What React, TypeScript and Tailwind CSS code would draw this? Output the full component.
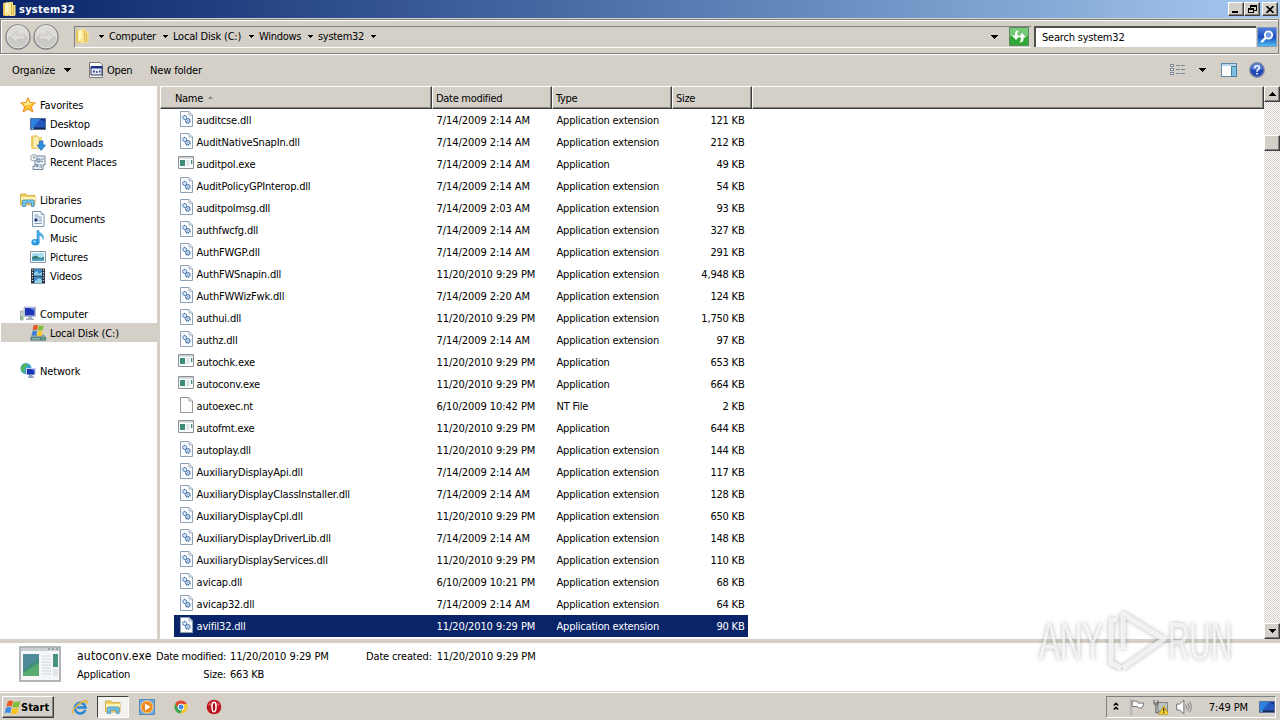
import React from 'react';
import clsx from 'clsx';

type IconProps = { className?: string };

interface FileRow {
  name: string;
  date: string;
  kind: 'dll' | 'exe' | 'nt';
  size: string;
}

const files: FileRow[] = [
  { name: 'auditcse.dll', date: '7/14/2009 2:14 AM', kind: 'dll', size: '121 KB' },
  { name: 'AuditNativeSnapIn.dll', date: '7/14/2009 2:14 AM', kind: 'dll', size: '212 KB' },
  { name: 'auditpol.exe', date: '7/14/2009 2:14 AM', kind: 'exe', size: '49 KB' },
  { name: 'AuditPolicyGPInterop.dll', date: '7/14/2009 2:14 AM', kind: 'dll', size: '54 KB' },
  { name: 'auditpolmsg.dll', date: '7/14/2009 2:03 AM', kind: 'dll', size: '93 KB' },
  { name: 'authfwcfg.dll', date: '7/14/2009 2:14 AM', kind: 'dll', size: '327 KB' },
  { name: 'AuthFWGP.dll', date: '7/14/2009 2:14 AM', kind: 'dll', size: '291 KB' },
  { name: 'AuthFWSnapin.dll', date: '11/20/2010 9:29 PM', kind: 'dll', size: '4,948 KB' },
  { name: 'AuthFWWizFwk.dll', date: '7/14/2009 2:20 AM', kind: 'dll', size: '124 KB' },
  { name: 'authui.dll', date: '11/20/2010 9:29 PM', kind: 'dll', size: '1,750 KB' },
  { name: 'authz.dll', date: '7/14/2009 2:14 AM', kind: 'dll', size: '97 KB' },
  { name: 'autochk.exe', date: '11/20/2010 9:29 PM', kind: 'exe', size: '653 KB' },
  { name: 'autoconv.exe', date: '11/20/2010 9:29 PM', kind: 'exe', size: '664 KB' },
  { name: 'autoexec.nt', date: '6/10/2009 10:42 PM', kind: 'nt', size: '2 KB' },
  { name: 'autofmt.exe', date: '11/20/2010 9:29 PM', kind: 'exe', size: '644 KB' },
  { name: 'autoplay.dll', date: '11/20/2010 9:29 PM', kind: 'dll', size: '144 KB' },
  { name: 'AuxiliaryDisplayApi.dll', date: '7/14/2009 2:14 AM', kind: 'dll', size: '117 KB' },
  { name: 'AuxiliaryDisplayClassInstaller.dll', date: '7/14/2009 2:14 AM', kind: 'dll', size: '128 KB' },
  { name: 'AuxiliaryDisplayCpl.dll', date: '11/20/2010 9:29 PM', kind: 'dll', size: '650 KB' },
  { name: 'AuxiliaryDisplayDriverLib.dll', date: '7/14/2009 2:14 AM', kind: 'dll', size: '148 KB' },
  { name: 'AuxiliaryDisplayServices.dll', date: '11/20/2010 9:29 PM', kind: 'dll', size: '110 KB' },
  { name: 'avicap.dll', date: '6/10/2009 10:21 PM', kind: 'dll', size: '68 KB' },
  { name: 'avicap32.dll', date: '7/14/2009 2:14 AM', kind: 'dll', size: '64 KB' },
  { name: 'avifil32.dll', date: '11/20/2010 9:29 PM', kind: 'dll', size: '90 KB' },
];

const typeNames = { dll: 'Application extension', exe: 'Application', nt: 'NT File' };

const Svg: React.FC<{ className?: string; children: React.ReactNode }> = ({ className, children }) => (
  <svg viewBox="0 0 16 16" className={clsx('h-4 w-4 shrink-0', className)}>
    {children}
  </svg>
);

const FolderIcon = ({ className }: IconProps) => (
  <Svg className={className}>
    <path d="M1 2l5-1v14H2l-1-1z" fill="#e8c557" />
    <path d="M7 1h4v3h2.500v10l-1 1H7z" fill="#f5dd84" />
    <path d="M3 2l6-1v14l-6-1z" fill="#f8e694" />
    <path d="M3.500 3l3-1v8l-3 3z" fill="#fdf6c8" />
    <path d="M9.500 2v12M11.500 5v9" stroke="#d5ac45" strokeWidth=".8" />
  </Svg>
);

const StarIcon = () => (
  <Svg>
    <path d="M8 .7l2.100 4.800 5.300.5-4 3.600 1.500 5.400L8 12.100 3.100 15l1.500-5.400-4-3.600 5.300-.5z" fill="#ffc42e" stroke="#e8892b" strokeWidth="1" />
    <path d="M8 2.800l1.400 3.500 3.600.3-4 .9-5 1.100 1-.9-2-1.300 3.700-.3z" fill="#fff0a0" />
  </Svg>
);

const DesktopIcon = ({ className }: IconProps) => (
  <Svg className={className}>
    <path d="M.5 2.500h15v11H.5z" fill="#2457bd" stroke="#5b6e96" />
    <path d="M1 3h9L3 12H1z" fill="#2c83df" />
    <path d="M10 3h5v3z" fill="#12368f" />
    <path d="M1 11.500h14V13H1z" fill="#16264c" />
    <path d="M1.500 11.500h2V13h-2z" fill="#5fd0ee" />
  </Svg>
);

const DownloadsIcon = () => (
  <Svg>
    <path d="M1 1l6-1v14H2l-1-1z" fill="#efcf66" />
    <path d="M3 1l6 1v12l-6-1z" fill="#fcf0ae" stroke="#d9b04a" strokeWidth=".5" />
    <path d="M9 2h3v5H9z" fill="#f2d470" />
    <path d="M9.500 6h3.500v4h2.500L11.200 15.500 7 10h2.500z" fill="#2f8fe0" stroke="#1c63b5" strokeWidth=".7" />
  </Svg>
);

const RecentIcon = () => (
  <Svg>
    <path d="M5 2h10v9h-2v4.500H3V12h2z" fill="#e9eff4" stroke="#71889c" />
    <path d="M7 5h3v3H7zM11 5h3M11 7.500h2M6 10.500h2v2H6zM9.500 11H12M9.500 13H12" fill="#bdd0de" stroke="#64809a" strokeWidth=".9" />
    <circle cx="3.800" cy="3.800" r="3.200" fill="#f5f8fa" stroke="#8fa0ae" />
    <path d="M3.800 2v2h1.500" fill="none" stroke="#506070" strokeWidth=".8" />
  </Svg>
);

const LibrariesIcon = () => (
  <Svg>
    <path d="M.5 2h5.500l1 1.500h8V13H.5z" fill="#f0d168" stroke="#c9a23c" strokeWidth=".8" />
    <path d="M1 5h14v3H1z" fill="#fdf3b5" />
    <path d="M2.500 14.500V9.300Q2.500 8 4 8h8.500Q14 8 14 9.300v5.200h-2.500V11h-6v3.500z" fill="#76c5ea" stroke="#3b8cc0" strokeWidth=".8" />
  </Svg>
);

const DocumentIcon = () => (
  <Svg>
    <path d="M2.500.5h8.500l3 3v12H2.500z" fill="#f8fbfe" stroke="#7f96ae" />
    <path d="M11 .5v3h3" fill="#d0deea" stroke="#7f96ae" strokeWidth=".7" />
    <path d="M4.500 4h4M4.500 6h7M8.500 8H12M8.500 10H12M4.500 12.500H12" stroke="#6e8fb8" strokeWidth=".9" />
    <path d="M4.500 7.500h3v3h-3z" fill="#17306a" />
  </Svg>
);

const MusicIcon = () => (
  <Svg>
    <path d="M8.200 0c.5 3 6.500 3.500 5 9.500-.2-2.500-2.500-4.200-4-4.300V13H7V0z" fill="#49afe8" stroke="#2682c4" strokeWidth=".5" />
    <ellipse cx="5.400" cy="12.300" rx="4" ry="3.200" fill="#2d97dd" />
    <ellipse cx="4.500" cy="11.500" rx="1.600" ry="1" fill="#9adcf8" />
  </Svg>
);

const PicturesIcon = () => (
  <Svg>
    <path d="M.5 2.500h15v11H.5z" fill="#fff" stroke="#8695a3" />
    <path d="M2 4h12v8H2z" fill="#a9dcf5" />
    <path d="M2 8l4-1.500L10 9l4-1v2H2z" fill="#347b65" />
    <path d="M2 9.500h12V12H2z" fill="#4e9fc7" />
  </Svg>
);

const VideosIcon = () => (
  <Svg>
    <path d="M1 .5h14v15H1z" fill="#26323f" />
    <path d="M4 1h8v6.500H4zM4 8.500h8V15H4z" fill="#3f88c5" />
    <path d="M4 5l3-2 2 3 3-2v3.500H4zM5 13l4-3 3 2v3H5z" fill="#8fd0e8" />
    <path d="M2.500 1.500v13M13.500 1.500v13" stroke="#dbe4ea" strokeWidth="1.200" strokeDasharray="1.200 1.400" />
  </Svg>
);

const ComputerIcon = () => (
  <Svg>
    <path d="M.5 5h2.500v9H.5z" fill="#dde3e4" stroke="#7c8b8c" strokeWidth=".7" />
    <path d="M1 10h1.500v3H1z" fill="#74bd53" />
    <path d="M4 1h11.500v9.500H4z" fill="#cdd6e5" stroke="#8d9bb5" strokeWidth=".6" />
    <path d="M5 2h9.500v7.500H5z" fill="#1a35b5" />
    <path d="M10 2h4.500v3z" fill="#6089ea" />
    <path d="M8 10.500h4v2h2V14H6v-1.500h2z" fill="#a5b0c3" />
  </Svg>
);

const WinFlag = ({ className }: IconProps) => (
  <svg viewBox="0 0 16 14" className={className}>
    <path d="M3.500 1.500q2.500-2 5-.5L7.300 6.200Q5 5 2.300 6.600z" fill="#ee5a24" />
    <path d="M9.300 1.300q2.500 1.400 6-.4L14 6.200q-2.800 1.600-6 .3z" fill="#7fbf35" />
    <path d="M2 7.500q2.400-1.600 5-.4L5.800 12.300Q3 11.100.5 12.700z" fill="#3a8be0" />
    <path d="M7.900 7.400q2.700 1.300 5.900-.3l-1.300 5.300q-2.900 1.700-5.800.3z" fill="#fcc419" />
  </svg>
);

const DiskIcon = () => (
  <Svg>
    <path d="M2 9.500h12l2 2.500v3.500H.5V12z" fill="#8ba5a5" />
    <path d="M.5 12H16v3.500H.5z" fill="#577f83" />
    <path d="M2 13h8v1.500H2z" fill="#88bab2" />
    <path d="M12.500 13H14v1.300h-1.500z" fill="#7df06c" />
    <path d="M3.500.5q2.200-1 4.500-.2L7.200 5Q5 4.300 2.600 5.400z" fill="#e65a24" />
    <path d="M8.800.5q2.200.8 5-.2L12.800 5q-2.200 1-4.800.2z" fill="#86bf3a" />
    <path d="M2.500 6.200q2-1.200 4.500-.4L6.300 10.500q-2-.7-4.600.3z" fill="#3c7fd8" />
    <path d="M7.800 6q2 .8 4.800-.2l-.8 4.700q-2 1-4.700.2z" fill="#fcc52a" />
  </Svg>
);

const NetworkIcon = () => (
  <Svg>
    <circle cx="6" cy="5.500" r="5.500" fill="#3aa3d0" />
    <path d="M2 3q3-3 6-2L6 4 4 5l1 3-2 1Q.500 7 1 5z" fill="#55b84c" />
    <path d="M6 5h9.500v7H6z" fill="#c9d3e8" />
    <path d="M7 6h7.500v5.500H7z" fill="#1833b8" />
    <path d="M11 6h3.500v2.500z" fill="#5b80e6" />
    <path d="M9 12h3.500v1.500H14V15H8v-1.500h1z" fill="#8f9fbd" />
  </Svg>
);

const DllIcon = () => (
  <Svg className="-ml-px">
    <path d="M2.500.5h8.500L14.500 4v11.500h-12z" fill="#fafcfe" stroke="#8fa1b5" />
    <path d="M11 .5V4h3.500" fill="#dfe8f0" stroke="#8fa1b5" strokeWidth=".8" />
    <path d="M4 5l3-2 2.500 3.500L6 9zM7.500 8L11 6.500l2 4-3 2.500-3-2z" fill="#cfe2f5" />
    <circle cx="6.700" cy="6.500" r="1.900" fill="#e6f0fa" stroke="#4574ad" strokeWidth="1.100" strokeDasharray="1.300 .5" />
    <circle cx="9.800" cy="9.800" r="2.200" fill="#e6f0fa" stroke="#33629e" strokeWidth="1.200" strokeDasharray="1.300 .5" />
    <circle cx="9.800" cy="9.800" r=".6" fill="#234f8c" />
  </Svg>
);

const ExeIcon = () => (
  <Svg className="-ml-px">
    <path d="M.5 1.500h15v12H.5z" fill="#fafbfb" stroke="#8c9297" />
    <path d="M1 2h14v1.500H1z" fill="#c9ced4" />
    <path d="M2 5h5v6H2z" fill="#3c8c78" />
    <path d="M8.500 6h3M8.500 8h3M8.500 10h3" stroke="#c0cbd2" />
    <path d="M13 5h1.300v4H13z" fill="#418e7d" />
  </Svg>
);

const BlankIcon = () => (
  <Svg className="-ml-px">
    <path d="M2.500.5h8.500L14.500 4v11.500h-12z" fill="#fcfcfc" stroke="#979797" />
    <path d="M11 .5V4h3.500" fill="#e8e8e8" stroke="#979797" strokeWidth=".8" />
  </Svg>
);

const fileIcons = { dll: DllIcon, exe: ExeIcon, nt: BlankIcon };

const Caret = ({ className, small }: IconProps & { small?: boolean }) => (
  <svg
    viewBox={small ? '0 0 5 3' : '0 0 7 4'}
    shapeRendering="crispEdges"
    className={clsx('shrink-0', small ? 'h-[3px] w-[5px]' : 'h-1 w-[7px]', className)}
  >
    <path d={small ? 'M0 0h5L2.500 3z' : 'M0 0h7L3.500 4z'} fill="#000" />
  </svg>
);

const bevel =
  'border border-t-white border-l-white border-r-[#404040] border-b-[#404040] bg-[#d4d0c8] shadow-[inset_-1px_-1px_0_#808080]';

const sidebar = [
  { label: 'Favorites', icon: StarIcon },
  { label: 'Desktop', icon: DesktopIcon, child: true },
  { label: 'Downloads', icon: DownloadsIcon, child: true },
  { label: 'Recent Places', icon: RecentIcon, child: true },
  null,
  { label: 'Libraries', icon: LibrariesIcon },
  { label: 'Documents', icon: DocumentIcon, child: true },
  { label: 'Music', icon: MusicIcon, child: true },
  { label: 'Pictures', icon: PicturesIcon, child: true },
  { label: 'Videos', icon: VideosIcon, child: true },
  null,
  { label: 'Computer', icon: ComputerIcon },
  { label: 'Local Disk (C:)', icon: DiskIcon, child: true, selected: true },
  null,
  { label: 'Network', icon: NetworkIcon },
];

const TitleBar = () => (
  <div className="flex h-[18px] shrink-0 items-center bg-linear-to-r from-[#0a246a] to-[#a6caf0] pr-[2px] pl-[2px]">
    <FolderIcon />
    <span className="ml-px pt-px text-[11px] font-bold tracking-[0.25px] text-white">system32</span>
    <div className="ml-auto flex">
      <button className={clsx('flex h-[14px] w-4 items-end pb-[2px] pl-[3px]', bevel)}>
        <span className="h-[2px] w-1.5 bg-black" />
      </button>
      <button className={clsx('flex h-[14px] w-4 items-center justify-center', bevel)}>
        <svg viewBox="0 0 10 10" shapeRendering="crispEdges" className="h-2.5 w-2.5">
          <path d="M3 1h6v5H7M3 1v3M3 2h6M1 4h5v4.500H1zM1 5h5" fill="none" stroke="#000" />
        </svg>
      </button>
      <button className={clsx('ml-[2px] flex h-[14px] w-4 items-center justify-center', bevel)}>
        <svg viewBox="0 0 8 7" className="h-[7px] w-2">
          <path d="M.5 0l7 7M7.500 0l-7 7" stroke="#000" strokeWidth="1.600" />
        </svg>
      </button>
    </div>
  </div>
);

const NavCircle = ({ flip }: { flip?: boolean }) => (
  <svg viewBox="0 0 26 26" className={clsx('h-[26px] w-[26px]', flip && '-scale-x-100')}>
    <circle cx="13" cy="13" r="12" fill="#cbc9c6" stroke="#808080" strokeWidth="1.300" />
    <path d="M2 12a11 11 0 0 1 22 0q-11 4-22 0z" fill="#dddbd9" />
    <circle cx="13" cy="13" r="10.800" fill="none" stroke="#e8e7e6" strokeWidth=".8" />
    <path d="M6 13l6-6v4h8v4h-8v4z" fill="#dfddda" stroke="#c2c0bd" strokeWidth=".8" />
  </svg>
);

const AddressBar = () => (
  <div className="mt-px mr-px flex h-[35px] shrink-0 items-center border border-[#808080] pl-1 shadow-[inset_1px_1px_0_#fff,0_1px_0_#fff]">
    <NavCircle />
    <div className="ml-[2px]">
      <NavCircle flip />
    </div>
    <div className="ml-[15px] flex h-[22px] w-[957px] items-center border-t border-b border-l border-t-[#808080] border-b-white border-l-[#808080]">
      <FolderIcon className="-mt-px" />
      <div className="ml-[8px] flex h-4 items-center">
        <Caret small />
        <span className="ml-[5px] w-[48px]">Computer</span>
        <Caret small className="ml-1.5" />
        <span className="ml-[5px] w-[70px] tracking-[-0.2px]">Local Disk (C:)</span>
        <Caret small className="ml-[6px]" />
        <span className="ml-[5px] w-[43px]">Windows</span>
        <Caret small className="ml-1.5" />
        <span className="ml-[5px] w-[46px]">system32</span>
        <Caret small className="ml-[7px]" />
      </div>
      <Caret className="mr-[11px] ml-auto" />
      <svg viewBox="0 0 20 19" className="mr-[2px] h-[19px] w-5 shrink-0">
        <path d="M.5.5h19v18H.5z" fill="#32a936" stroke="#5f8b60" />
        <path d="M1 1h18v8q-9 3-18 0z" fill="#75c978" />
        <path d="M9.500 3.500Q6 3.500 6 7v1.500H3L7 13l3.800-4.500H8.300Q8 6 9.500 3.500z" fill="#fff" />
        <path d="M10.500 15.500Q14.500 15.500 14.500 12v-1.500H17L13.200 6 9.500 10.500H12q.3 2.500-1.500 5z" fill="#fff" />
      </svg>
    </div>
    <div className="ml-[3px] flex h-[21px] w-[222px] items-center border-t-2 border-l-2 border-[#505050] bg-white pl-[6px] tracking-[-0.2px]">
      Search system32
    </div>
    <svg viewBox="0 0 20 20" className="ml-px h-5 w-5 shrink-0">
      <defs>
        <linearGradient id="search" x1="0" y1="0" x2="0" y2="1">
          <stop offset="0" stopColor="#5280dc" />
          <stop offset=".5" stopColor="#1d4dc3" />
          <stop offset="1" stopColor="#4fc2ee" />
        </linearGradient>
      </defs>
      <path d="M.5.5h19v19H.5z" fill="url(#search)" stroke="#8499bd" />
      <circle cx="11.500" cy="8" r="3.700" fill="#6e9ff0" stroke="#fff" strokeWidth="1.800" />
      <path d="M8.500 11L5 14.500" stroke="#fff" strokeWidth="2.400" strokeLinecap="round" />
    </svg>
  </div>
);

const Toolbar = () => (
  <div className="flex h-8 shrink-0 items-center pr-[15px] pl-3">
    <span className="w-[46px] pt-[2px] tracking-[-0.15px]">Organize</span>
    <Caret className="ml-1.5" />
    <svg viewBox="0 0 16 16" className="ml-[17px] h-4 w-4">
      <path d="M1.500.5H12L14.500 3v12.500h-13z" fill="#fff" stroke="#777" />
      <path d="M3 4.500h11v8.500H3z" fill="#e8ecf6" stroke="#222e60" />
      <path d="M3 4.500h11v2H3z" fill="#1b3393" />
      <path d="M5 8.500h2v2H5zM8 9h1.500v2H8zM11 8.500h1.500v2H11z" fill="#3c4d9c" />
    </svg>
    <span className="ml-[3px] w-[29px] pt-[2px]">Open</span>
    <span className="ml-[14px] pt-[2px] tracking-[-0.15px]">New folder</span>
    <svg viewBox="0 0 16 14" shapeRendering="crispEdges" className="ml-auto h-[14px] w-4">
      <path d="M.5 1.500h3v2h-3zM.5 5.500h3v2h-3zM.5 9.500h3v2h-3z" fill="#fff" stroke="#7c8794" />
      <path d="M6 2.500h4M11 2.500h4M6 6.500h4M11 6.500h4M6 10.500h4M11 10.500h4" stroke="#7a869a" />
    </svg>
    <Caret className="ml-[13px]" />
    <svg viewBox="0 0 16 14" shapeRendering="crispEdges" className="ml-[15px] h-[14px] w-4">
      <path d="M.5.5h15v13H.5z" fill="#fff" stroke="#5f87a8" />
      <path d="M1 1h14v2H1z" fill="#b5d5e8" />
      <path d="M10.500 3h5v10.500h-5z" fill="#79bfe0" stroke="#4b82a4" />
    </svg>
    <svg viewBox="0 0 16 16" className="ml-3 h-4 w-4">
      <circle cx="8" cy="8" r="7.200" fill="#2449b4" stroke="#7a88a8" strokeWidth="1.400" />
      <path d="M2.500 7a5.500 5.500 0 0 1 11 0q-5.500 2-11 0z" fill="#5b82dc" />
      <path d="M5.700 6.200Q5.800 3.800 8 3.800t2.300 2Q10.300 7 8.900 7.900 8 8.500 8 9.700" fill="none" stroke="#fff" strokeWidth="1.600" />
      <path d="M7.200 11h1.700v1.600H7.200z" fill="#fff" />
    </svg>
  </div>
);

const Sidebar = () => (
  <div className="h-full w-[160px] shrink-0 border-r-[3px] border-[#d4d0c8] bg-white pt-[9px]">
    {sidebar.map((item, i) =>
      item ? (
        <div
          key={item.label}
          className={clsx(
            'ml-px flex h-[19px] items-center',
            item.child ? 'pl-[29px]' : 'pl-[19px]',
            item.selected && '-mr-[3px] bg-[#d4d0c8]'
          )}
        >
          <item.icon />
          <span className="ml-1 pt-[2px] tracking-[-0.15px]">{item.label}</span>
        </div>
      ) : (
        <div key={i} className="h-[19px]" />
      )
    )}
  </div>
);

const HeaderCell: React.FC<{ className: string; children?: React.ReactNode }> = ({ className, children }) => (
  <div
    className={clsx(
      'flex h-full items-center border-t border-r border-b border-l border-t-white border-r-[#404040] border-b-[#404040] border-l-white bg-[#d4d0c8] pt-[2px] shadow-[inset_-1px_-1px_0_#808080]',
      className
    )}
  >
    {children}
  </div>
);

const FileList = () => (
  <div className="min-w-0 flex-1 bg-white">
    <div className="flex h-[23px]">
      <HeaderCell className="w-[272px] pl-[14px]">
        Name
        <svg viewBox="0 0 5 3" className="mb-[3px] ml-[5px] h-[3px] w-[5px]">
          <path d="M0 3h5L2.500 0z" fill="#8a8a8a" />
        </svg>
      </HeaderCell>
      <HeaderCell className="w-[120px] pl-[3px]">Date modified</HeaderCell>
      <HeaderCell className="w-[120px] pl-[3px]">Type</HeaderCell>
      <HeaderCell className="w-[80px] pl-[3px]">Size</HeaderCell>
      <HeaderCell className="flex-1" />
    </div>
    {files.map((file, i) => {
      const FileIcon = fileIcons[file.kind];
      const selected = i === files.length - 1;
      return (
        <div
          key={file.name}
          className={clsx(
            'ml-[14px] flex h-[22px] w-[574px] items-center pt-px',
            selected && 'bg-[#0a246a] text-white'
          )}
        >
          <div className="flex w-[262px] items-center pl-[5px]">
            <div className="flex w-[17px] pb-[3px]">
              <FileIcon />
            </div>
            <span className="pt-px pl-[0.5px] tracking-[-0.18px] whitespace-nowrap">{file.name}</span>
          </div>
          <span className="w-[120px] pt-px pl-[0.5px] tracking-[-0.07px]">{file.date}</span>
          <span className="w-[120px] pt-px pl-[0.5px] tracking-[-0.2px]">{typeNames[file.kind]}</span>
          <span className="flex-1 pt-px pr-[3.5px] text-right tracking-[-0.2px]">{file.size}</span>
        </div>
      );
    })}
  </div>
);

const ScrollBar = () => (
  <div className="flex w-4 shrink-0 flex-col bg-[conic-gradient(#fff_25%,#d4d0c8_0_50%,#fff_0_75%,#d4d0c8_0)] bg-size-[2px_2px]">
    <button className={clsx('flex h-4 items-center justify-center', bevel)}>
      <Caret className="rotate-180" />
    </button>
    <div className={clsx('mt-[33px] h-4', bevel)} />
    <button className={clsx('mt-auto flex h-4 items-center justify-center', bevel)}>
      <Caret />
    </button>
  </div>
);

const DetailsPane = () => (
  <div className="flex h-[49px] shrink-0 bg-white">
    <svg viewBox="0 0 42 36" className="mt-[3px] ml-[19px] h-9 w-[42px]">
      <path d="M1 1h40v34H1z" fill="#f5f6f7" stroke="#9b9fa3" strokeWidth="1.500" />
      <path d="M2 2h38v3H2z" fill="#cbd0d5" />
      <path d="M29 3h2M33 3h2M37 3h2" stroke="#66707a" />
      <path d="M4 8h16v22H4z" fill="#418e7c" />
      <path d="M4 8h16v5Q10 17 4 26z" fill="#4d8b9b" />
      <path d="M4 27q8-5 16-10v13H4z" fill="#58ac70" />
      <path d="M23 10h9M23 13h9M23 16h9M23 19h9M23 22h9M23 25h9M23 28h9" stroke="#d3d8db" />
      <path d="M34 8h5v13h-5z" fill="#47917f" />
      <path d="M34 23h5v7h-5z" fill="#e2e5e8" />
    </svg>
    <div className="ml-4 w-[79px] pt-[5px] leading-[18px]">
      <div className="-mt-px mb-px text-[12px] leading-[18px] tracking-[0.25px]">autoconv.exe</div>
      <div className="tracking-[-0.2px]">Application</div>
    </div>
    <div className="w-[70px] pt-[5px] text-right leading-[18px] whitespace-nowrap">
      <div className="tracking-[-0.25px]">Date modified:</div>
      <div className="tracking-[-0.2px]">Size:</div>
    </div>
    <div className="w-[136px] pt-[5px] pl-1 leading-[18px] tracking-[-0.07px]">
      <div>11/20/2010 9:29 PM</div>
      <div className="tracking-[-0.2px]">663 KB</div>
    </div>
    <div className="ml-1 flex gap-[5px] pt-[5px] leading-[18px]">
      <span className="tracking-[-0.15px]">Date created:</span>
      <span className="tracking-[-0.07px]">11/20/2010 9:29 PM</span>
    </div>
  </div>
);

const TaskBar = () => (
  <div className="flex h-[28px] shrink-0 items-center border-t border-white bg-[#d4d0c8] pr-1 pl-[2px] shadow-[0_-1px_0_#d4d0c8]">
    <button className={clsx('mt-px flex h-[22px] w-[52px] items-center pl-px', bevel)}>
      <WinFlag className="h-[15px] w-[17px] shrink-0" />
      <span className="pt-px text-[11px] font-bold tracking-normal">Start</span>
    </button>
    <svg viewBox="0 0 16 16" className="ml-[18px] h-4 w-4">
      <path d="M13.300 10.800A5.300 5.300 0 1 1 13.500 8.500H5" fill="none" stroke="#2b86d6" strokeWidth="2.600" />
      <path d="M1 14.500C-.5 11 6 3.500 14.500 1.500c1.500 1 .5 2.500 0 3" fill="none" stroke="#eab530" strokeWidth="1.300" />
    </svg>
    <div className="ml-[9px] flex h-[22px] w-8 items-center justify-center border border-t-[#404040] border-r-white border-b-white border-l-[#404040] bg-[#f3f2ef]">
      <LibrariesIcon />
    </div>
    <svg viewBox="0 0 16 16" className="ml-[10px] h-4 w-4">
      <path d="M.5.5h15v15H.5z" fill="#6cabdd" stroke="#5588b5" />
      <circle cx="8" cy="8" r="6.200" fill="#f28b1e" stroke="#fbd8a2" />
      <path d="M6 4.500v7L11.500 8z" fill="#fff" />
    </svg>
    <svg viewBox="0 0 16 16" className="ml-[18px] h-4 w-4">
      <circle cx="8" cy="8" r="6.500" fill="#f7c52c" />
      <path d="M8 1.500A6.500 6.500 0 0 1 13.800 5H8L5 9.500 2.300 4.800A6.500 6.500 0 0 1 8 1.500z" fill="#df4735" />
      <path d="M2.300 4.800L5.500 10l3.500.9-1.700 3.600A6.500 6.500 0 0 1 2.300 4.800z" fill="#35a35a" />
      <circle cx="8" cy="8" r="3" fill="#4386e8" stroke="#fff" />
    </svg>
    <svg viewBox="0 0 16 16" className="ml-[17px] h-4 w-4">
      <circle cx="8" cy="8" r="7.300" fill="#bd1520" />
      <path d="M2 6a6.500 5 0 0 1 12 0q-6 3-12 0z" fill="#dd5058" />
      <ellipse cx="8" cy="8" rx="2" ry="4.700" fill="#a50d18" stroke="#fff" strokeWidth="1.500" />
    </svg>
    <div className="mt-px ml-auto flex h-[22px] w-[170px] items-center border border-t-[#808080] border-r-white border-b-white border-l-[#808080] pl-[6px]">
      <svg viewBox="0 0 6 8" className="mb-[2px] h-2 w-1.5">
        <path d="M.7 3.500L3 1.200l2.300 2.300M.7 7.500L3 5.200l2.300 2.300" fill="none" stroke="#000" strokeWidth="1.300" />
      </svg>
      <svg viewBox="0 0 16 16" className="ml-[10px] h-4 w-4">
        <path d="M2 .5v15" stroke="#777" strokeWidth="2.200" />
        <path d="M2 1v14" stroke="#fff" strokeWidth="1" />
        <path d="M3.300 2h5l1 2h6l-2 5H9.500l-1-1.500H3.300z" fill="#fff" stroke="#666" strokeWidth=".9" />
      </svg>
      <svg viewBox="0 0 16 16" className="ml-2 h-4 w-4">
        <path d="M5 3.500h10v9H5z" fill="#bfc6ca" stroke="#777" />
        <path d="M1 1v3q0 2 2 2v8h3M5 1v3q0 2-2 2M1 4h4" fill="none" stroke="#555" />
        <path d="M11 6.500l5 9H6z" fill="#f8d22f" stroke="#b18e0a" strokeWidth=".7" />
        <path d="M11 9v3.500M11 13.300v1.200" stroke="#222" strokeWidth="1.200" />
      </svg>
      <svg viewBox="0 0 16 16" className="ml-2 h-4 w-4">
        <path d="M.7 5h3L8 1v14l-4.300-4h-3z" fill="#fff" stroke="#666" strokeWidth=".9" />
        <path d="M10 5.500q2 2.500 0 5M12 4q3 4 0 8M14 2.500q3.200 5.500 0 11" fill="none" stroke="#777" strokeWidth=".9" />
      </svg>
      <span className="ml-[17px] w-[40px] pt-px tracking-[-0.1px] whitespace-nowrap">7:49 PM</span>
      <DesktopIcon className="ml-[11px]" />
    </div>
  </div>
);

const Watermark = () => (
  <svg
    viewBox="0 0 200 72"
    className="absolute top-[605px] left-[1036px] h-[72px] w-[200px] overflow-visible fill-white/70 font-['Liberation_Sans_Narrow','Liberation_Sans',sans-serif] drop-shadow-[0_0_2px_rgba(0,0,0,0.4)]"
  >
    <text x="3" y="54" fontSize="51" textLength="64" lengthAdjust="spacingAndGlyphs">ANY</text>
    <text x="132" y="54" fontSize="51" textLength="64" lengthAdjust="spacingAndGlyphs">RUN</text>
    <path
      d="M87 44V9l41 25-41 29M81 15h-6v43l10 5"
      className="fill-none stroke-white/75"
      strokeWidth="5"
      strokeLinejoin="round"
    />
  </svg>
);

export default function App() {
  return (
    <div className="relative flex h-[720px] w-[1280px] flex-col overflow-hidden bg-[#d4d0c8] font-['DejaVu_Sans_Condensed','DejaVu_Sans',sans-serif] text-[11px] leading-[14px] tracking-[-0.3px] text-black">
      <TitleBar />
      <AddressBar />
      <Toolbar />
      <div className="flex h-[553px] shrink-0">
        <Sidebar />
        <FileList />
        <ScrollBar />
      </div>
      <div className="h-1 shrink-0 bg-[#d4d0c8]" />
      <DetailsPane />
      <TaskBar />
      <Watermark />
    </div>
  );
}
